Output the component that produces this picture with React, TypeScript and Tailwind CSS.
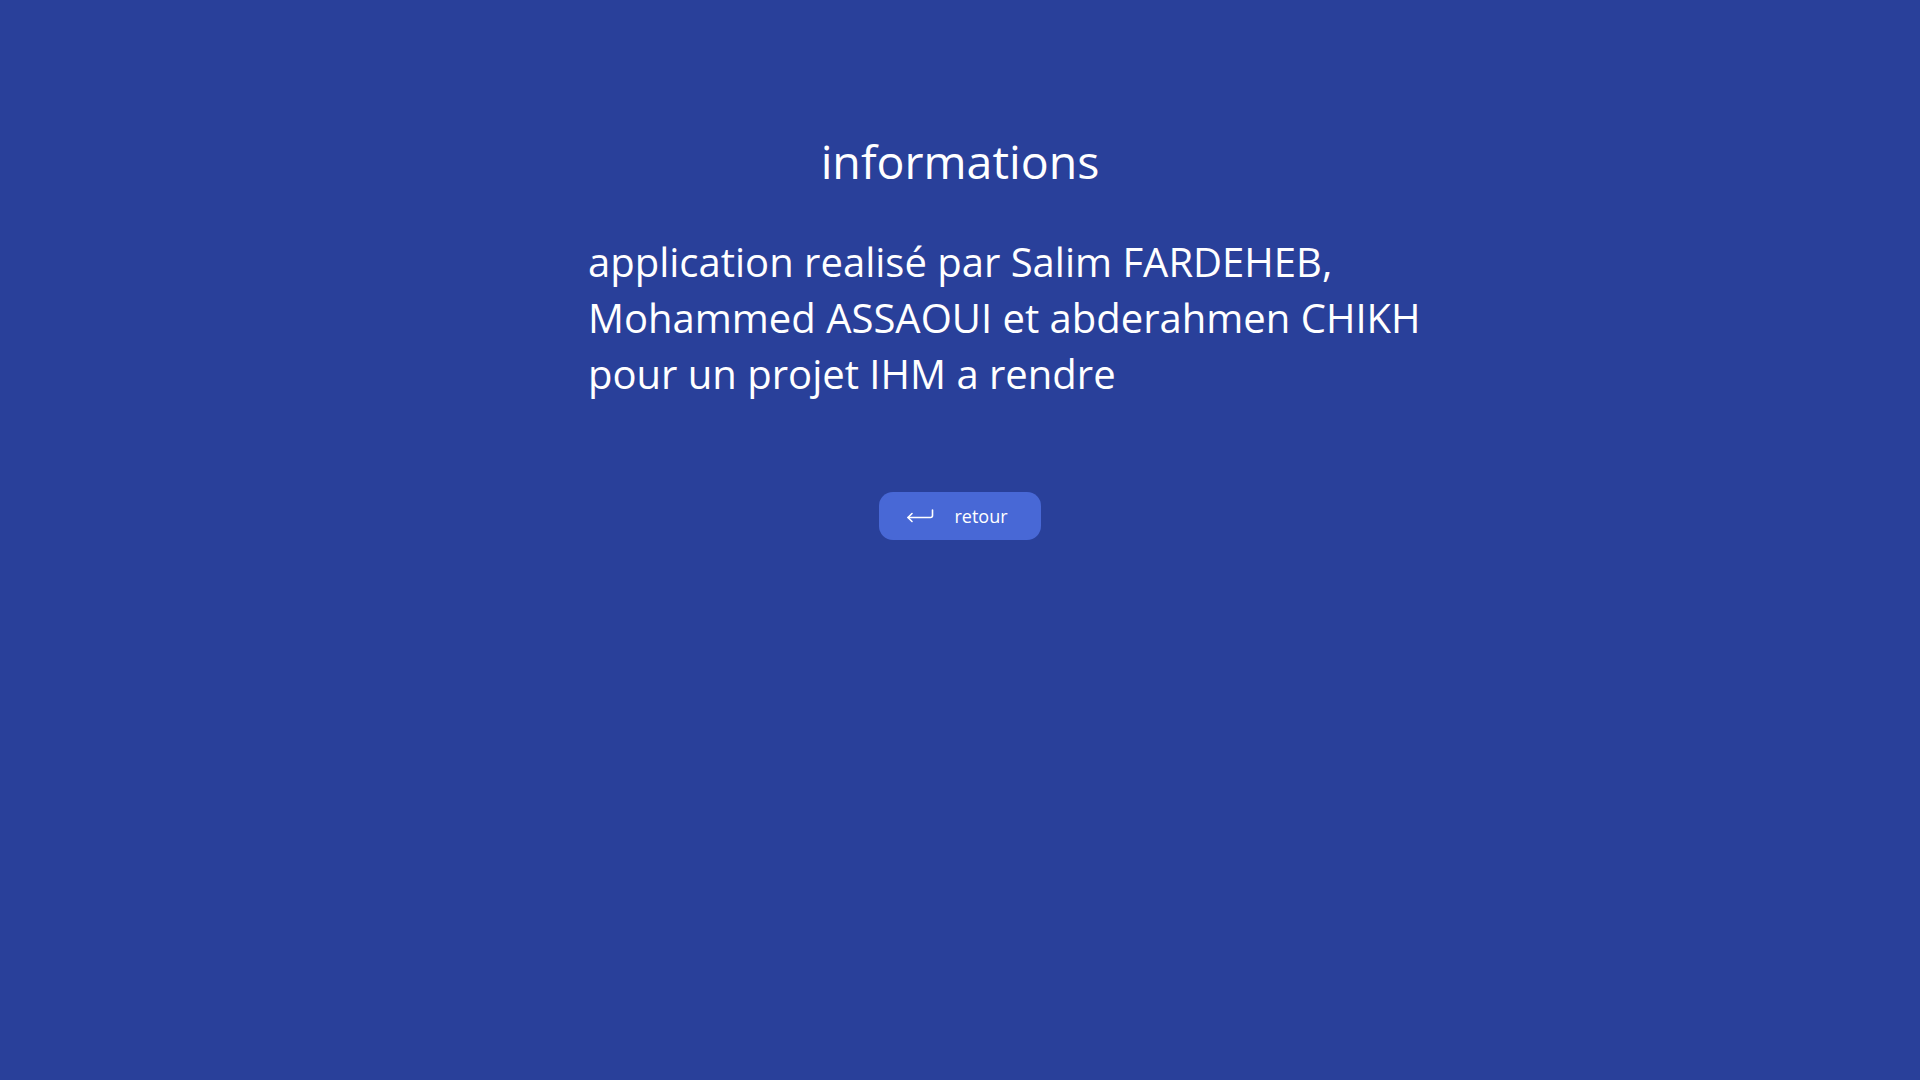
import React from "react";

const ReturnIcon = () => (
  <svg width="28" height="14" viewBox="0 0 28 14" fill="none" stroke="white" strokeWidth="1.6" strokeLinecap="round" strokeLinejoin="round">
    <path d="M26.5 1v5.5a2 2 0 0 1-2 2H2" />
    <path d="M6 4.5 2 8.5l4 4" />
  </svg>
);

export default function App() {
  return (
    <div
      className="min-h-screen w-full bg-[#29409a] text-white flex flex-col items-center"
      style={{ fontFamily: '"Open Sans", "Noto Sans", sans-serif' }}
    >
      <h1 className="mt-[126px] text-[46.5px] leading-[70px] font-normal">informations</h1>
      <div className="mt-[38px] w-[744px] text-[40px] leading-[56px]">
        <p className="whitespace-nowrap">application realisé par Salim FARDEHEB,</p>
        <p className="whitespace-nowrap">Mohammed ASSAOUI et abderahmen CHIKH</p>
        <p className="whitespace-nowrap">pour un projet IHM a rendre</p>
      </div>
      <button className="mt-[90px] h-[48px] w-[162px] pr-[6px] rounded-[14px] bg-[#4868d6] flex items-center justify-center gap-[20px] text-[18px] text-white">
        <ReturnIcon />
        <span>retour</span>
      </button>
    </div>
  );
}
